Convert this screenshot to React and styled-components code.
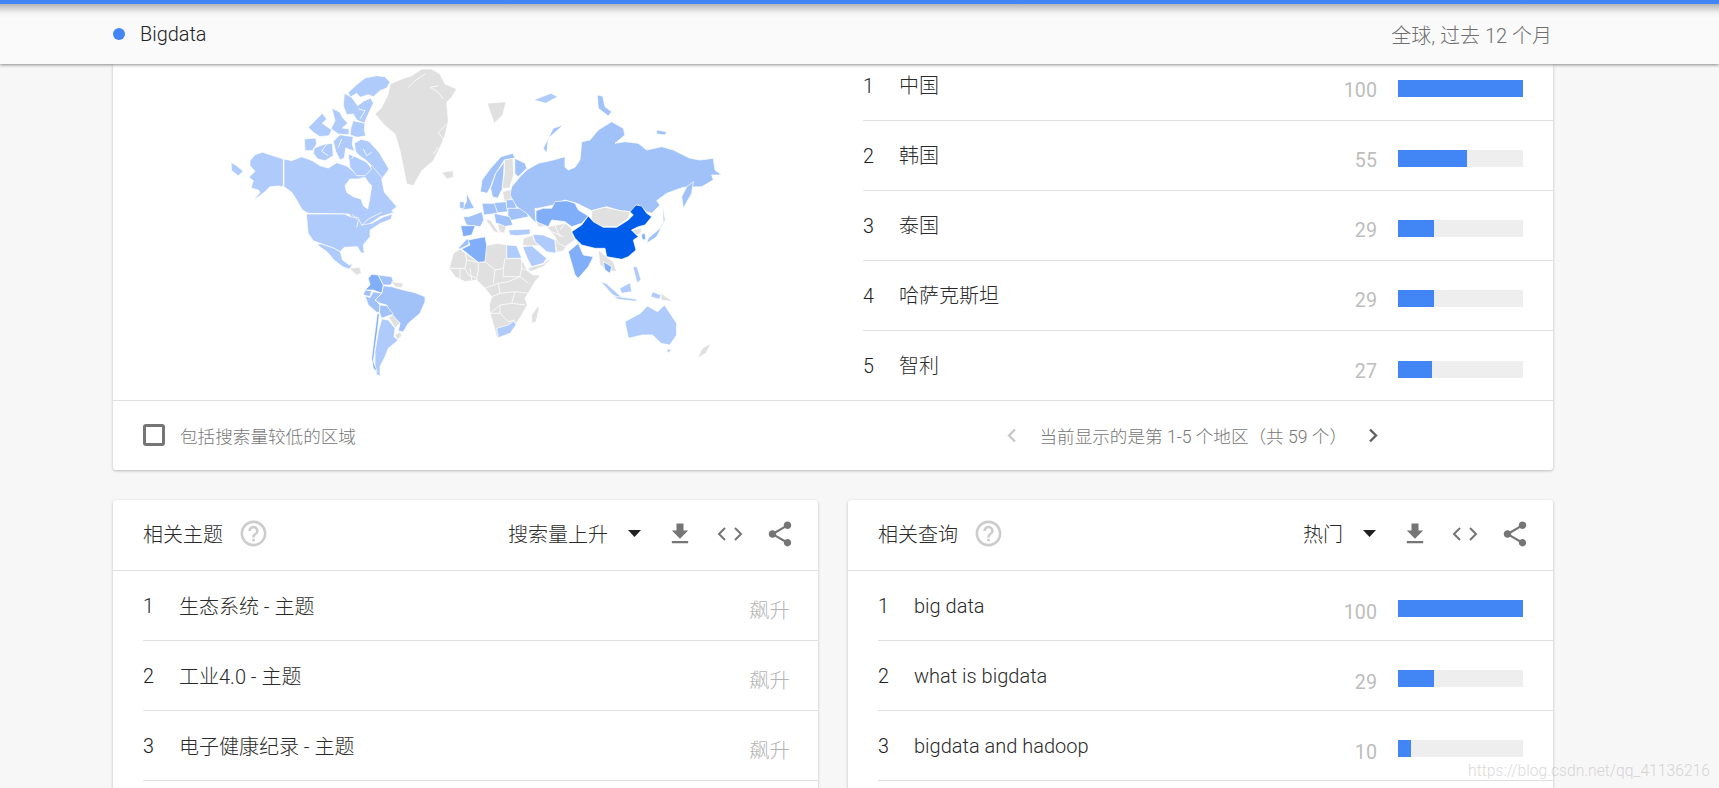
import React from "react";
import styled, { createGlobalStyle } from "styled-components";

const GlobalStyle = createGlobalStyle`
  html, body {
    margin: 0;
    height: 100%;
    overflow: hidden;
    background: #f7f7f7;
    font-family: Roboto, "Noto Sans CJK SC", sans-serif;
    color: #3c3c3c;
  }
`;

const TopBar = styled.header`
  position: relative;
  z-index: 2;
  box-sizing: border-box;
  height: 64px;
  border-top: 4px solid #4285f4;
  padding: 0 167px 0 113px;
  display: flex;
  align-items: center;
  background: linear-gradient(#b4b4b4 0, #f2f2f2 9px, #fafafa 14px);
  box-shadow: 0 1px 3px rgba(0, 0, 0, 0.45);
`;

const Dot = styled.span`
  width: 12px;
  height: 12px;
  border-radius: 50%;
  background: #4285f4;
  margin-right: 15px;
`;

const TermName = styled.span`
  font-size: 19.9px;
  font-weight: 300;
  color: #222;
`;

const Scope = styled.span`
  margin-left: auto;
  font-size: 20px;
  font-weight: 300;
  color: #6f6f6f;
`;

const Page = styled.main`
  padding-left: 113px;
  width: 1440px;
  display: flex;
  flex-direction: column;
  gap: 30px;
`;

const Card = styled.section`
  background: #fff;
  border-radius: 0 0 3px 3px;
  box-shadow: 0 1px 3px rgba(0, 0, 0, 0.25);
  overflow: hidden;
`;

const MapArea = styled.div`
  display: flex;
  height: 336px;
`;

const MapPanel = styled.div`
  flex: 0 0 750px;
  padding-left: 97px;
  box-sizing: border-box;
`;

const MapSvg = styled.svg`
  display: block;
  width: 540px;
  height: 336px;
  filter: blur(0.35px);
`;

const Row = styled.div`
  box-sizing: border-box;
  height: 70px;
  margin-left: ${({ $inset }) => $inset}px;
  padding-right: 30px;
  display: flex;
  align-items: center;
  border-bottom: ${({ $last }) => ($last ? "none" : "1px solid #e0e0e0")};
`;

const Rank = styled.span`
  flex: 0 0 36px;
  margin-top: 1px;
  font-size: 19.7px;
  font-weight: 300;
  color: #222;
`;

const Label = styled.span`
  flex: 1;
  font-size: 20px;
  font-weight: 300;
  color: #2a2a2a;
`;

const Value = styled.span`
  margin-top: 13px;
  font-size: 19.7px;
  color: #bdbdbd;
`;

const Rising = styled(Value)`
  margin: 7px -2px 0 0;
  font-size: 20.4px;
  font-weight: 300;
  color: #b4b4b4;
`;

const RegionList = styled.div`
  flex: 1;
  margin-top: -13px;
  ${Label} {
    margin-bottom: 3px;
  }
  ${Value} {
    margin-top: 10px;
  }
`;

const Bar = styled.div`
  flex: 0 0 125px;
  height: 17px;
  margin: 6px 0 0 21px;
  background: #eeeeee;
`;

const BarFill = styled.div`
  height: 100%;
  width: ${({ $value }) => $value}%;
  background: #4285f4;
`;

const CardFooter = styled.div`
  box-sizing: border-box;
  height: 70px;
  border-top: 1px solid #e0e0e0;
  padding: 0 174px 0 30px;
  display: flex;
  align-items: center;
`;

const Checkbox = styled.span`
  box-sizing: border-box;
  width: 22px;
  height: 22px;
  border: 3px solid #757575;
  border-radius: 3px;
  margin: 0 15px 2px 0;
`;

const FooterText = styled.span`
  font-size: 17.6px;
  font-weight: 300;
  color: #777;
`;

const Pager = styled.div`
  margin-left: auto;
  display: flex;
  align-items: center;
`;

const PagerText = styled(FooterText)`
  margin: 0 21px 0 22px;
  white-space: nowrap;
`;

const Columns = styled.div`
  display: grid;
  grid-template-columns: 705px 705px;
  gap: 30px;
`;

const PanelCard = styled(Card)`
  border-radius: 3px;
  min-height: 300px;
`;

const PanelHeader = styled.div`
  box-sizing: border-box;
  height: 71px;
  padding: 0 23px 3px 30px;
  display: flex;
  align-items: center;
  border-bottom: 1px solid #e0e0e0;
`;

const PanelTitle = styled.h2`
  margin: 0 15px 0 0;
  font-size: 20px;
  font-weight: 300;
  color: #2a2a2a;
`;

const HelpIcon = styled.svg`
  width: 31px;
  height: 31px;
  fill: #cccccc;
`;

const SortSelect = styled.span`
  margin-left: auto;
  font-size: 20px;
  font-weight: 300;
  color: #2a2a2a;
`;

const Caret = styled.svg`
  width: 13px;
  height: 7px;
  margin: 0 25px 0 20px;
  fill: #212121;
`;

const ActionIcon = styled.svg`
  width: ${({ $size }) => $size}px;
  height: ${({ $size }) => $size}px;
  fill: #757575;
`;

const CodeIcon = styled.svg`
  width: 26px;
  height: 14px;
  margin: 0 22px 0 23px;
  fill: none;
  stroke: #757575;
  stroke-width: 2;
`;

const Chevron = styled.svg`
  width: 11px;
  height: 15px;
  fill: none;
  stroke: ${({ $muted }) => ($muted ? "#c8c8c8" : "#616161")};
  stroke-width: 2.4;
`;

const Watermark = styled.div`
  position: absolute;
  right: 9px;
  bottom: 8px;
  z-index: 3;
  font-size: 15.7px;
  font-weight: 300;
  color: rgba(175, 175, 175, 0.5);
`;

const GREY = "#e0e0e0";
const LIGHT = "#a1c2f9";
const PALE = "#afcbfb";
const MID = "#80aef8";
const CHINA = "#005ceb";
const SEA = "#ffffff";

// traced from crops of the map: [origin x, origin y, scale x, scale y]
const north = [225, 64, 1 / 3, 1 / 3];
const south = [320, 225, 1 / 3, 1 / 3];
const africa = [440, 225, 1 / 3, 1 / 3];
const asia = [510, 80, 1 / 3, 1 / 3];
const whole = [210, 60, 1 / 2.904, 1 / 3];

const mapShapes = [
  [north, PALE, "18,295 35,305 55,322 40,335 20,320"],
  [north, PALE, "75,290 90,272 112,265 135,272 175,285 175,368 160,366 135,368 118,385 85,410 105,385 100,378 78,372 85,350 72,340 90,322 75,305"],
  [north, PALE, "177,285 200,290 230,278 262,290 285,305 310,312 335,296 365,306 385,322 400,335 430,325 440,300 460,310 478,325 490,322 470,345 478,385 500,410 515,428 500,440 522,456 505,446 465,458 430,482 405,492 390,475 372,450 250,448 232,438 215,408 200,385 177,368"],
  [north, PALE, "370,270 395,280 425,295 440,315 420,335 395,335 375,310"],
  [north, SEA, "360,365 375,345 400,345 420,340 430,355 440,365 435,400 428,435 415,425 408,405 385,398 365,385"],
  [north, PALE, "495,55 485,72 465,80 445,98 430,92 405,100 395,88 375,100 370,85 395,62 420,42 455,35 480,38"],
  [north, PALE, "358,88 380,100 398,125 415,112 438,102 445,118 430,150 418,178 395,168 385,150 365,152 355,125"],
  [north, PALE, "385,170 420,178 418,196 422,216 395,220 375,212 378,190"],
  [north, PALE, "320,132 345,145 352,160 368,178 352,192 372,195 372,212 340,210 318,195 330,170"],
  [north, PALE, "250,190 270,170 292,148 305,165 292,178 320,198 312,215 285,218 265,205"],
  [north, PALE, "238,225 272,222 275,240 262,260 240,260"],
  [north, PALE, "268,252 300,240 322,238 325,275 300,290 278,285 265,268"],
  [north, PALE, "325,232 345,212 385,218 382,240 388,262 362,252 358,282 345,288 332,262"],
  [north, PALE, "388,238 408,226 432,232 462,265 492,315 472,342 445,310 422,288 400,272 388,258"],
  [north, GREY, "495,60 530,45 560,35 590,15 620,15 645,30 660,60 695,75 680,100 665,115 670,170 660,215 645,250 625,290 590,320 565,365 545,360 535,310 525,260 510,210 480,185 450,150 470,130 490,90"],
  [north, GREY, "650,325 685,320 685,340 665,345"],
  [whole, GREY, "805,130 860,125 850,165 825,190 815,160"],
  [whole, PALE, "940,120 990,100 1010,110 975,130"],
  [whole, PALE, "280,462 390,462 412,472 430,472 440,495 470,490 505,470 530,462 525,478 495,490 465,510 465,530 445,555 448,580 438,578 428,560 390,562 378,575 360,565 325,552 300,542 285,520"],
  [whole, PALE, "310,552 325,552 360,565 378,575 385,600 405,615 415,610 405,628 385,620 360,600 340,575 325,565"],
  [whole, GREY, "405,625 435,622 440,640 425,645"],
  [south, LIGHT, "190,182 215,185 250,195 285,203 315,215 315,230 300,265 265,295 250,320 235,318 240,295 215,272 200,240 180,235 165,225 185,205"],
  [south, MID, "155,148 175,150 190,180 185,205 160,195 135,195 150,180 145,160"],
  [south, LIGHT, "175,150 215,155 220,170 210,180 190,180"],
  [south, GREY, "215,170 250,175 245,188 225,185"],
  [south, LIGHT, "135,195 155,197 150,215 130,210"],
  [south, LIGHT, "135,212 150,218 160,200 185,205 165,225 180,240 178,262 170,262 145,240"],
  [south, LIGHT, "180,240 200,242 220,268 205,272 185,280 178,262"],
  [south, GREY, "205,275 220,272 240,295 225,308 215,292"],
  [south, PALE, "185,282 205,285 225,310 222,335 235,345 205,370 195,395 180,425 180,450 190,455 170,450 165,425 165,380 175,320"],
  [south, MID, "172,265 178,268 172,320 165,370 160,410 172,440 160,430 155,400 160,360"],
  [south, GREY, "225,330 240,320 245,333 232,345"],
  [africa, GREY, "40,85 60,72 115,112 135,110 135,62 175,55 200,60 200,100 240,100 245,105 265,140 280,150 302,150 285,170 265,205 255,220 262,240 245,270 222,305 205,325 170,338 165,315 150,265 148,240 155,215 135,190 110,165 75,170 45,155 28,130"],
  [africa, LIGHT, "80,42 90,45 85,60 60,72 55,70"],
  [africa, MID, "85,45 135,35 140,60 135,110 115,112 65,72 90,60"],
  [africa, PALE, "170,310 205,300 222,288 228,300 210,325 175,338"],
  [africa, PALE, "200,60 230,62 245,100 200,100"],
  [africa, GREY, "292,245 298,250 288,290 275,295 275,270"],
  [africa, PALE, "248,65 275,62 320,100 310,115 275,125 262,100"],
  [africa, GREY, "265,128 310,117 335,95 325,110 310,125 270,140"],
  [africa, GREY, "250,40 278,30 285,50 300,62 275,62 248,62"],
  [africa, PALE, "278,28 310,30 345,45 348,85 320,80 300,62 285,50"],
  [africa, GREY, "345,45 375,35 395,30 385,55 370,78 350,82"],
  [africa, PALE, "205,15 270,12 270,28 230,32 210,30"],
  [whole, LIGHT, "785,395 790,360 815,325 845,290 880,280 885,295 855,300 830,340 815,380 805,400"],
  [whole, LIGHT, "815,385 830,340 855,305 850,385 835,415 820,410"],
  [whole, GREY, "855,300 880,295 882,345 870,385 848,385 855,340"],
  [whole, LIGHT, "885,295 915,310 920,325 895,350 885,340"],
  [whole, GREY, "850,395 885,385 885,415 855,425"],
  [whole, LIGHT, "745,398 760,430 768,445 730,450 745,425"],
  [whole, LIGHT, "725,425 738,425 738,445 725,445"],
  [whole, LIGHT, "750,470 790,455 795,480 785,500 745,495 735,470"],
  [whole, MID, "728,497 770,497 760,525 735,530"],
  [whole, LIGHT, "790,430 830,430 835,460 795,465"],
  [whole, LIGHT, "825,428 860,425 865,455 835,458"],
  [whole, LIGHT, "860,420 885,418 890,445 862,447"],
  [whole, LIGHT, "865,445 915,445 925,470 870,482 865,465"],
  [whole, LIGHT, "825,460 870,470 880,495 855,500 830,490"],
  [whole, GREY, "800,478 815,480 840,520 825,515"],
  [whole, GREY, "835,490 860,500 855,520 840,515"],
  [asia, LIGHT, "5,320 30,290 50,270 85,250 130,240 165,230 165,262 175,270 195,262 210,240 215,185 240,180 265,150 305,125 340,145 345,165 315,190 345,185 385,190 410,210 455,200 490,210 540,235 570,240 610,235 615,270 635,285 605,285 610,300 575,320 520,322 470,340 440,362 450,375 425,400 410,395 385,375 360,395 330,392 290,380 245,392 200,370 165,360 130,375 85,385 75,385 78,430 50,400 20,380 0,345"],
  [asia, LIGHT, "530,320 550,305 545,340 520,385 515,350"],
  [asia, LIGHT, "160,135 130,145 100,205 110,220 115,175"],
  [asia, LIGHT, "440,150 470,155 465,165 440,162"],
  [asia, LIGHT, "262,45 278,48 285,80 305,95 295,108 265,85"],
  [asia, MID, "78,392 100,385 125,385 135,365 170,362 195,370 205,390 235,408 215,430 185,440 165,425 125,420 115,440 90,440 78,420"],
  [asia, GREY, "245,392 285,382 330,392 360,395 355,415 320,440 280,440 245,425"],
  [asia, GREY, "78,425 115,440 165,430 185,445 185,458 195,480 165,500 145,490 135,470 110,440 85,440"],
  [asia, CHINA, "185,455 215,435 235,408 250,425 280,442 320,442 355,420 370,405 360,395 378,375 395,378 410,400 425,410 405,435 385,440 365,450 385,470 370,480 378,510 355,530 335,538 290,530 285,505 255,505 215,495 195,475"],
  [asia, GREY, "365,450 395,445 392,460 380,465"],
  [asia, MID, "395,462 405,460 407,480 396,478"],
  [asia, LIGHT, "458,375 465,420 440,470 410,490 415,475 450,445 460,425"],
  [asia, MID, "175,515 205,490 220,525 250,530 235,560 205,595 195,585"],
  [asia, GREY, "265,510 290,530 310,545 320,575 290,570 270,555"],
  [asia, MID, "280,545 305,560 300,580 285,570"],
  [whole, PALE, "1135,665 1150,670 1205,720 1170,705"],
  [whole, PALE, "1190,685 1220,668 1225,695 1195,700"],
  [whole, PALE, "1170,708 1240,718 1238,724 1185,718"],
  [whole, PALE, "1228,620 1240,620 1252,660 1240,668"],
  [whole, PALE, "1285,695 1310,705 1305,718 1280,710"],
  [whole, GREY, "1310,700 1345,725 1310,720"],
  [whole, PALE, "1205,785 1250,760 1270,738 1300,755 1320,735 1355,790 1355,825 1335,855 1310,850 1285,825 1255,825 1215,835"],
  [whole, PALE, "1325,868 1340,868 1332,880"],
  [whole, GREY, "1455,850 1440,880 1415,895 1430,865"],
];

// coast cuts and country borders, drawn over the shapes in white
const mapBorders = [
  [north, "640,65 615,70 640,85 655,105"],
  [north, "600,30 570,50 550,70"],
  [north, "665,180 640,205 655,225"],
  [north, "640,250 625,270"],
  [north, "405,120 425,100"],
  [north, "400,135 420,140 405,165"],
  [north, "440,265 425,275 415,255"],
  [north, "305,240 290,262 310,275"],
  [north, "350,225 340,250"],
  [north, "385,225 392,262 380,285"],
  [north, "380,450 400,470 395,490"],
  [north, "410,485 430,465 470,445"],
  [africa, "75,80 80,105 115,112"],
  [africa, "30,130 75,130 80,105"],
  [africa, "75,130 85,150 110,160"],
  [africa, "115,112 115,135 110,165"],
  [africa, "135,110 165,135 160,175"],
  [africa, "165,135 190,130 195,100"],
  [africa, "190,130 190,155 240,155"],
  [africa, "245,105 245,130 240,155 265,175"],
  [africa, "240,155 205,170 175,175 135,190"],
  [africa, "175,175 180,205 155,215"],
  [africa, "180,205 225,200 215,235 180,240 150,265"],
  [africa, "225,200 265,205"],
  [africa, "215,235 255,240"],
  [africa, "180,240 180,265 205,290 225,285"],
  [africa, "150,265 180,265"],
  [africa, "245,130 300,150"],
  [africa, "60,130 60,165"],
  [africa, "90,130 95,165"],
  [asia, "100,435 125,455 160,470"],
  [asia, "130,425 150,470"],
  [asia, "165,430 150,450"],
];

const placePoints = ([ox, oy, sx, sy], points) =>
  points
    .split(" ")
    .map((pair) => {
      const [x, y] = pair.split(",").map(Number);
      return `${(ox + x * sx).toFixed(1)},${(oy + y * sy).toFixed(1)}`;
    })
    .join(" ");

const WorldMap = () => (
  <MapSvg viewBox="210 64 540 336">
    {mapShapes.map(([frame, fill, points], i) => (
      <polygon
        key={i}
        points={placePoints(frame, points)}
        fill={fill}
        stroke="#fff"
        strokeWidth="0.7"
      />
    ))}
    {mapBorders.map(([frame, points], i) => (
      <polyline
        key={i}
        points={placePoints(frame, points)}
        fill="none"
        stroke="#fff"
        strokeWidth="0.8"
      />
    ))}
  </MapSvg>
);

const regions = [
  ["中国", 100],
  ["韩国", 55],
  ["泰国", 29],
  ["哈萨克斯坦", 29],
  ["智利", 27],
];

const topics = ["生态系统 - 主题", "工业4.0 - 主题", "电子健康纪录 - 主题"];

const queries = [
  ["big data", 100],
  ["what is bigdata", 29],
  ["bigdata and hadoop", 10],
];

const ScoreRow = ({ rank, label, value, inset, last }) => (
  <Row $inset={inset} $last={last}>
    <Rank>{rank}</Rank>
    <Label>{label}</Label>
    <Value>{value}</Value>
    <Bar>
      <BarFill $value={value} />
    </Bar>
  </Row>
);

const PanelTop = ({ title, sort }) => (
  <PanelHeader>
    <PanelTitle>{title}</PanelTitle>
    <HelpIcon viewBox="0 0 24 24">
      <path d="M11 18h2v-2h-2v2zm1-16C6.48 2 2 6.48 2 12s4.48 10 10 10 10-4.48 10-10S17.52 2 12 2zm0 18c-4.41 0-8-3.59-8-8s3.59-8 8-8 8 3.59 8 8-3.59 8-8 8zm0-14c-2.21 0-4 1.79-4 4h2c0-1.1.9-2 2-2s2 .9 2 2c0 2-3 1.75-3 5h2c0-2.25 3-2.5 3-5 0-2.21-1.79-4-4-4z" />
    </HelpIcon>
    <SortSelect>{sort}</SortSelect>
    <Caret viewBox="0 0 13 7">
      <polygon points="0,0 13,0 6.5,7" />
    </Caret>
    <ActionIcon $size={28} viewBox="0 0 24 24">
      <path d="M19 9h-4V3H9v6H5l7 7 7-7zM5 18v2h14v-2H5z" />
    </ActionIcon>
    <CodeIcon viewBox="0 0 26 14">
      <polyline points="8,1 2,7 8,13" />
      <polyline points="18,1 24,7 18,13" />
    </CodeIcon>
    <ActionIcon $size={30} viewBox="0 0 24 24">
      <path d="M18 16.08c-.76 0-1.44.3-1.96.77L8.91 12.7c.05-.23.09-.46.09-.7s-.04-.47-.09-.7l7.05-4.11c.54.5 1.25.81 2.04.81 1.66 0 3-1.34 3-3s-1.34-3-3-3-3 1.34-3 3c0 .24.04.47.09.7L8.04 9.81C7.5 9.31 6.79 9 6 9c-1.66 0-3 1.34-3 3s1.34 3 3 3c.79 0 1.5-.31 2.04-.81l7.12 4.16c-.05.21-.08.43-.08.65 0 1.61 1.31 2.92 2.92 2.92 1.61 0 2.92-1.31 2.92-2.92s-1.31-2.92-2.92-2.92z" />
    </ActionIcon>
  </PanelHeader>
);

export default function App() {
  return (
    <>
      <GlobalStyle />
      <TopBar>
        <Dot />
        <TermName>Bigdata</TermName>
        <Scope>全球, 过去 12 个月</Scope>
      </TopBar>
      <Page>
        <Card>
          <MapArea>
            <MapPanel>
              <WorldMap />
            </MapPanel>
            <RegionList>
              {regions.map(([label, value], i) => (
                <ScoreRow
                  key={label}
                  rank={i + 1}
                  label={label}
                  value={value}
                  inset={0}
                  last={i === regions.length - 1}
                />
              ))}
            </RegionList>
          </MapArea>
          <CardFooter>
            <Checkbox />
            <FooterText>包括搜索量较低的区域</FooterText>
            <Pager>
              <Chevron $muted viewBox="0 0 11 15">
                <polyline points="9,1.5 3,7.5 9,13.5" />
              </Chevron>
              <PagerText>当前显示的是第 1-5 个地区（共 59 个）</PagerText>
              <Chevron viewBox="0 0 11 15">
                <polyline points="2,1.5 8,7.5 2,13.5" />
              </Chevron>
            </Pager>
          </CardFooter>
        </Card>
        <Columns>
          <PanelCard>
            <PanelTop title="相关主题" sort="搜索量上升" />
            {topics.map((label, i) => (
              <Row key={label} $inset={30}>
                <Rank>{i + 1}</Rank>
                <Label>{label}</Label>
                <Rising>飙升</Rising>
              </Row>
            ))}
          </PanelCard>
          <PanelCard>
            <PanelTop title="相关查询" sort="热门" />
            {queries.map(([label, value], i) => (
              <ScoreRow key={label} rank={i + 1} label={label} value={value} inset={30} />
            ))}
          </PanelCard>
        </Columns>
      </Page>
      <Watermark>https://blog.csdn.net/qq_41136216</Watermark>
    </>
  );
}
